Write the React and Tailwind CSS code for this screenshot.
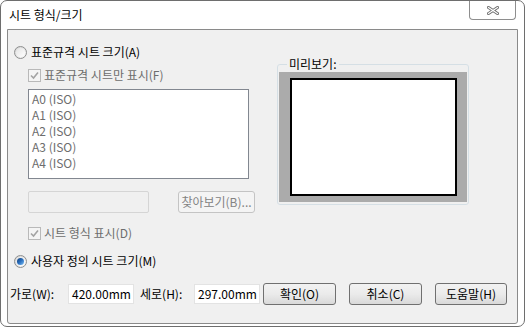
import React from "react";

const font = { fontFamily: '"Noto Sans CJK KR", "Liberation Sans", sans-serif' };

function Radio({ checked }) {
  return (
    <div className="w-[13px] h-[13px] rounded-full border border-[#8e8f8f] bg-gradient-to-br from-[#d4d4d4] to-[#f8f8f8] flex items-center justify-center">
      <div className="w-[9px] h-[9px] rounded-full bg-gradient-to-br from-[#e4e4e4] to-[#ffffff] flex items-center justify-center">
        {checked && (
          <div className="w-[7px] h-[7px] rounded-full bg-gradient-to-br from-[#123f7a] via-[#2a6fbe] to-[#7cc0f5]" />
        )}
      </div>
    </div>
  );
}

function DisabledCheck() {
  return (
    <div className="w-[13px] h-[13px] border border-[#b9b9b9] bg-[#f4f4f4] flex items-center justify-center">
      <svg width="9" height="9" viewBox="0 0 9 9">
        <path d="M1 4.5 L3.5 7 L8 1.5" fill="none" stroke="#a3a3a3" strokeWidth="1.6" />
      </svg>
    </div>
  );
}

function Button({ children, disabled, className = "" }) {
  return (
    <div
      className={`h-[22px] rounded-[3px] border flex items-center justify-center text-[12px] leading-[16px] ${
        disabled
          ? "border-[#c4c4c4] bg-[#f4f4f4] text-[#838383]"
          : "border-[#707070] bg-gradient-to-b from-[#f2f2f2] via-[#ebebeb] to-[#d9d9d9] text-black"
      } ${className}`}
    >
      {children}
    </div>
  );
}

export default function App() {
  const sizes = ["A0 (ISO)", "A1 (ISO)", "A2 (ISO)", "A3 (ISO)", "A4 (ISO)"];

  return (
    <div
      style={font}
      className="w-[525px] h-[327px] bg-white border border-[#6e6e6e] rounded-[7px] flex flex-col overflow-hidden text-[12px] leading-[16px]"
    >
      {/* title bar */}
      <div className="h-[28px] flex justify-between pl-[8px] pr-[8px] shrink-0">
        <div className="pt-[6px] text-black">시트 형식/크기</div>
        <div className="w-[47px] h-[19px] border border-t-0 border-[#8e8e8e] rounded-b-[4px] flex items-center justify-center bg-white">
          <svg width="12" height="9" viewBox="0 0 12 9">
            <path d="M1.5 1.5 L10.5 7.5 M10.5 1.5 L1.5 7.5" stroke="#707070" strokeWidth="3" strokeLinecap="square" />
            <path d="M1.5 1.5 L10.5 7.5 M10.5 1.5 L1.5 7.5" stroke="#ffffff" strokeWidth="1.1" strokeLinecap="square" />
          </svg>
        </div>
      </div>

      {/* client area */}
      <div className="flex-1 mx-[6px] mb-[2px] border border-[#8a8a8a] rounded-b-[3px] bg-[#f0f0f0] flex flex-col">
        <div className="flex">
          <div className="w-[262px] flex flex-col">
            <div className="mt-[14px] ml-[6px] h-[16px] flex items-center gap-[4px]">
              <Radio />
              <span className="text-black">표준규격 시트 크기(A)</span>
            </div>
            <div className="mt-[7px] ml-[20px] h-[16px] flex items-center gap-[3px]">
              <DisabledCheck />
              <span className="text-[#6d6d6d]">표준규격 시트만 표시(F)</span>
            </div>
            <div className="mt-[6px] ml-[20px] w-[221px] h-[90px] border border-[#828790] bg-white pt-[1px] pl-[3px] text-[#6d6d6d]">
              {sizes.map((s) => (
                <div key={s} className="h-[16px]">
                  {s}
                </div>
              ))}
            </div>
            <div className="mt-[12px] ml-[20px] flex items-center">
              <div className="w-[121px] h-[22px] border border-[#d5d5d5] rounded-[2px] bg-[#f0f0f0]" />
              <Button disabled className="ml-[29px] w-[77px]">
                찾아보기(B)...
              </Button>
            </div>
          </div>

          {/* preview */}
          <fieldset className="mt-[26px] ml-[7px] w-[192px] h-[149px] border border-[#d5dfe5] rounded-[3px] px-[1px] pb-[1px]">
            <legend className="ml-[8px] px-[2px] text-black">미리보기:</legend>
            <div className="h-[130px] bg-[#ababab] flex items-center justify-center">
              <div className="w-[167px] h-[118px] border-2 border-black bg-white" />
            </div>
          </fieldset>
        </div>

        <div className="mt-[12px] ml-[20px] h-[16px] flex items-center gap-[3px]">
          <DisabledCheck />
          <span className="text-[#6d6d6d]">시트 형식 표시(D)</span>
        </div>
        <div className="mt-[12px] ml-[6px] h-[16px] flex items-center gap-[4px]">
          <Radio checked />
          <span className="text-black">사용자 정의 시트 크기(M)</span>
        </div>

        <div className="mt-[14px] h-[22px] flex items-center">
          <span className="ml-[2px] w-[58px] text-black">가로(W):</span>
          <div className="w-[66px] h-[20px] border border-[#e3e3e3] bg-white pl-[3px] flex items-center text-black">
            420.00mm
          </div>
          <span className="ml-[6px] w-[54px] text-black">세로(H):</span>
          <div className="w-[66px] h-[20px] border border-[#e3e3e3] bg-white pl-[3px] flex items-center text-black">
            297.00mm
          </div>
          <Button className="ml-[3px] w-[73px]">확인(O)</Button>
          <Button className="ml-[13px] w-[73px]">취소(C)</Button>
          <Button className="ml-[13px] w-[72px]">도움말(H)</Button>
        </div>
      </div>
    </div>
  );
}
